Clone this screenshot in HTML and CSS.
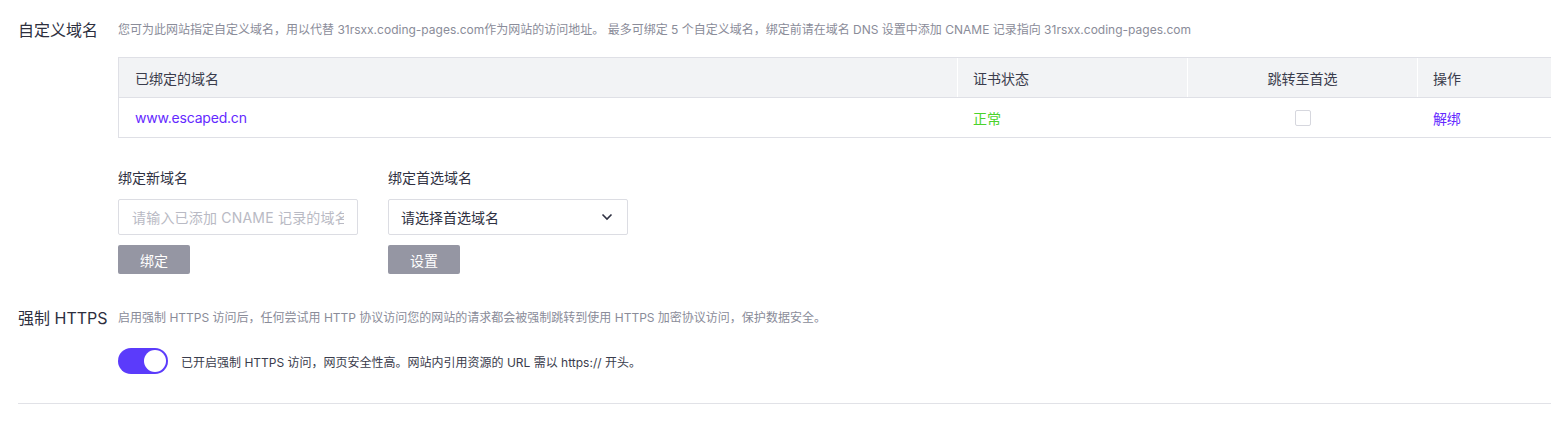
FILE: index.html
```html
<!DOCTYPE html>
<html lang="zh">
<head>
<meta charset="utf-8">
<title>自定义域名</title>
<link rel="stylesheet" href="styles.css">
</head>
<body>
<div class="page">
  <section class="block domains">
    <h2 class="block-title">自定义域名</h2>
    <p class="block-desc">您可为此网站指定自定义域名，用以代替 31rsxx.coding-pages.com作为网站的访问地址。 最多可绑定 5 个自定义域名，绑定前请在域名 DNS 设置中添加 CNAME 记录指向 31rsxx.coding-pages.com</p>
    <div class="block-body">
      <div class="table">
        <div class="tr th">
          <div class="cell c1">已绑定的域名</div>
          <div class="cell c2">证书状态</div>
          <div class="cell c3">跳转至首选</div>
          <div class="cell c4">操作</div>
        </div>
        <div class="tr">
          <div class="cell c1"><a class="link">www.escaped.cn</a></div>
          <div class="cell c2"><span class="ok">正常</span></div>
          <div class="cell c3"><span class="checkbox"></span></div>
          <div class="cell c4"><a class="link">解绑</a></div>
        </div>
      </div>
      <div class="forms">
        <div class="form">
          <label class="form-label">绑定新域名</label>
          <div class="input"><span class="placeholder">请输入已添加 CNAME 记录的域名</span></div>
          <button class="btn">绑定</button>
        </div>
        <div class="form">
          <label class="form-label">绑定首选域名</label>
          <div class="input select">
            <span class="select-value">请选择首选域名</span>
            <svg class="chevron" width="12" height="8" viewBox="0 0 12 8"><path d="M1.5 1.5 L6 6 L10.5 1.5" fill="none" stroke="#2f3142" stroke-width="1.6"/></svg>
          </div>
          <button class="btn">设置</button>
        </div>
      </div>
    </div>
  </section>
  <section class="block https">
    <h2 class="block-title">强制 HTTPS</h2>
    <p class="block-desc">启用强制 HTTPS 访问后，任何尝试用 HTTP 协议访问您的网站的请求都会被强制跳转到使用 HTTPS 加密协议访问，保护数据安全。</p>
    <div class="block-body">
      <div class="switch-row">
        <span class="switch on"><span class="knob"></span></span>
        <span class="switch-text">已开启强制 HTTPS 访问，网页安全性高。网站内引用资源的 URL 需以 https:// 开头。</span>
      </div>
    </div>
  </section>
  <div class="divider"></div>
</div>
</body>
</html>
```

FILE: styles.css
```css
html, body {
  margin: 0;
  padding: 0;
  background: #fff;
}
body {
  font-family: "Inter", "Noto Sans CJK SC", sans-serif;
  color: #2f3142;
}
.page {
  padding: 18px 0 0 18px;
  overflow: hidden;
}
.block {
  display: grid;
  grid-template-columns: 100px 1fr;
  align-items: center;
}
.block-title {
  margin: 0;
  font-size: 16px;
  font-weight: 400;
  line-height: 22px;
  color: #2d2f3e;
  white-space: nowrap;
  padding-top: 1px;
}
.block-desc {
  margin: 0;
  font-size: 12px;
  line-height: 22px;
  color: #8a8c99;
  white-space: nowrap;
  overflow: hidden;
}
.block-body {
  grid-column: 2;
  min-width: 0;
}
.domains .block-body {
  margin-top: 16px;
}
.table {
  border: 1px solid #dfe0e6;
  border-right: none;
  border-bottom: none;
  font-size: 14px;
}
.tr {
  display: flex;
  height: 39px;
  border-bottom: 1px solid #dfe0e6;
}
.th {
  background: #f2f3f5;
  color: #3a3c4c;
}
.cell {
  display: flex;
  align-items: center;
  padding: 0 16px;
  box-sizing: border-box;
  white-space: nowrap;
}
.c1 { width: 838px; flex: none; }
.c2, .c3 { width: 230px; flex: none; border-left: 1px solid transparent; padding-left: 15px; }
.c4 { flex: 1; border-left: 1px solid transparent; padding-left: 15px; }
.th .c2, .th .c3, .th .c4 { border-left-color: #fff; }
.c3 { justify-content: center; padding: 0; }
.link {
  color: #6429ff;
  text-decoration: none;
  letter-spacing: -0.2px;
}
.ok { color: #4ad32c; }
.checkbox {
  width: 14px;
  height: 14px;
  border: 1px solid #d6d7de;
  border-radius: 2px;
  background: #fff;
}
.forms {
  display: flex;
  gap: 30px;
  margin-top: 30px;
}
.form {
  display: flex;
  flex-direction: column;
  align-items: flex-start;
  width: 240px;
}
.form-label {
  font-size: 14px;
  line-height: 20px;
  color: #2f3142;
}
.input {
  margin-top: 11px;
  width: 240px;
  height: 36px;
  box-sizing: border-box;
  border: 1px solid #dcdde3;
  border-radius: 2px;
  display: flex;
  align-items: center;
  padding: 0 13px;
  font-size: 14px;
  overflow: hidden;
  white-space: nowrap;
}
.placeholder {
  color: #b9bac4;
  flex: 1;
  min-width: 0;
  overflow: hidden;
  letter-spacing: 0.2px;
}
.select { justify-content: space-between; padding: 0 14px 0 12px; }
.select-value { color: #2f3142; }
.btn {
  margin-top: 10px;
  width: 72px;
  height: 29px;
  border: none;
  border-radius: 2px;
  background: #9596a3;
  color: #fff;
  font-family: inherit;
  font-size: 14px;
  padding: 0;
}
.https {
  margin-top: 32px;
}
.https .block-body {
  margin-top: 19px;
}
.switch-row {
  display: flex;
  align-items: center;
  gap: 13px;
}
.switch {
  width: 50px;
  height: 26px;
  border-radius: 13px;
  background: #5b3bfb;
  display: flex;
  align-items: center;
  justify-content: flex-end;
  padding: 0 2px;
  box-sizing: border-box;
  flex: none;
}
.knob {
  width: 22px;
  height: 22px;
  border-radius: 50%;
  background: #fff;
}
.switch-text {
  font-size: 12px;
  color: #3a3c4c;
  white-space: nowrap;
}
.divider {
  margin-top: 29px;
  height: 1px;
  background: #e1e2e7;
}
```
